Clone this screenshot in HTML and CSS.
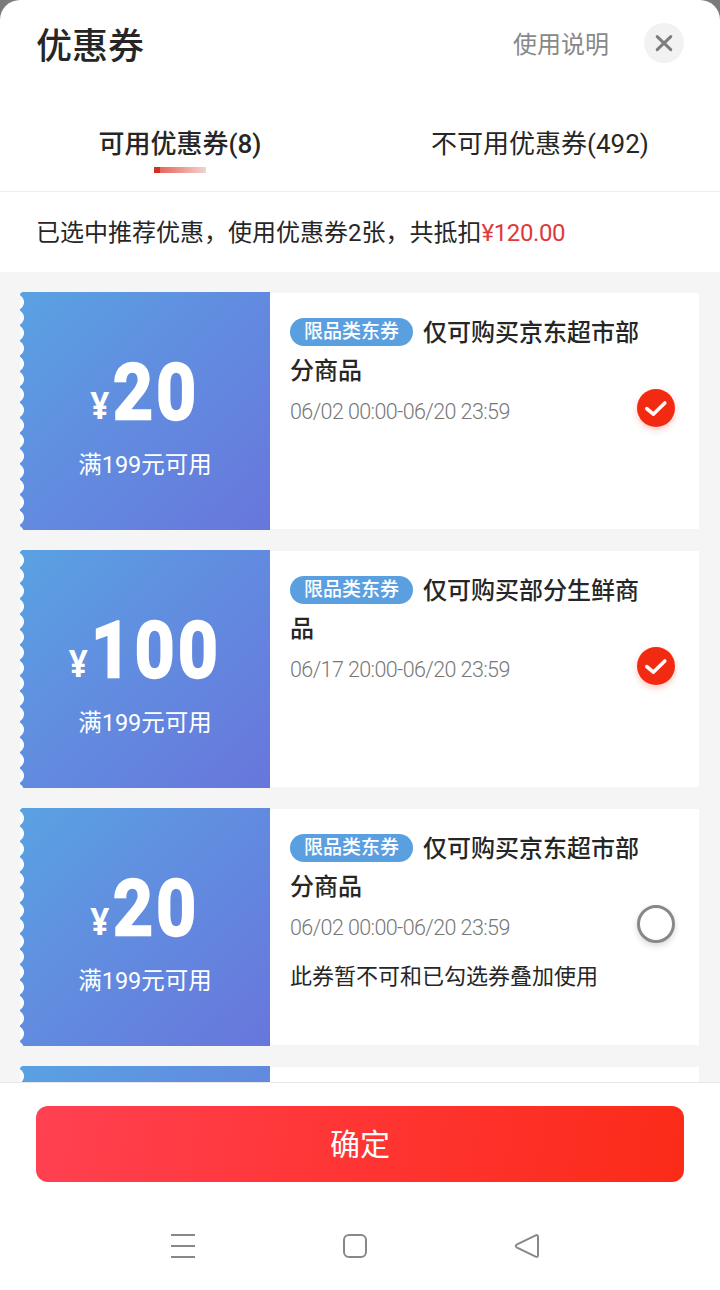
FILE: index.html
```html
<!DOCTYPE html>
<html lang="zh-CN">
<head>
    <meta charset="UTF-8">
    <title>优惠券</title>
    <link rel="stylesheet" href="styles.css">
</head>
<body>
    <div class="popup">
        <header class="header">
            <h1 class="title">优惠券</h1>
            <a class="help">使用说明</a>
            <button class="close" aria-label="关闭">
                <svg width="40" height="40" viewBox="0 0 40 40"><path d="M13.2 13.6l13.6 13M26.8 13.6l-13.6 13" stroke="#7d7d7d" stroke-width="3" stroke-linecap="round"/></svg>
            </button>
        </header>

        <!-- tabs -->
        <nav class="tabs">
            <div class="tab active"><span>可用优惠券(8)</span></div>
            <div class="tab"><span>不可用优惠券(492)</span></div>
        </nav>

        <p class="summary">已选中推荐优惠，使用优惠券2张，共抵扣<span class="red">¥120.00</span></p>

        <!-- coupon list -->
        <main class="list">
            <div class="coupon">
                <div class="price">
                    <div class="amount"><span class="yen">¥</span><span class="num">20</span></div>
                    <div class="limit">满199元可用</div>
                </div>
                <div class="info">
                    <div class="name"><span class="tag">限品类东券</span>仅可购买京东超市部分商品</div>
                    <div class="date">06/02 00:00-06/20 23:59</div>
                </div>
                <div class="check checked">
                    <svg width="38" height="38" viewBox="0 0 38 38"><path d="M9.8 19.6l6.5 5.6L27.8 14" fill="none" stroke="#fff" stroke-width="3.6" stroke-linecap="round" stroke-linejoin="round"/></svg>
                </div>
            </div>

            <div class="coupon">
                <div class="price">
                    <div class="amount"><span class="yen">¥</span><span class="num">100</span></div>
                    <div class="limit">满199元可用</div>
                </div>
                <div class="info">
                    <div class="name"><span class="tag">限品类东券</span>仅可购买部分生鲜商品</div>
                    <div class="date">06/17 20:00-06/20 23:59</div>
                </div>
                <div class="check checked">
                    <svg width="38" height="38" viewBox="0 0 38 38"><path d="M9.8 19.6l6.5 5.6L27.8 14" fill="none" stroke="#fff" stroke-width="3.6" stroke-linecap="round" stroke-linejoin="round"/></svg>
                </div>
            </div>

            <div class="coupon">
                <div class="price">
                    <div class="amount"><span class="yen">¥</span><span class="num">20</span></div>
                    <div class="limit">满199元可用</div>
                </div>
                <div class="info">
                    <div class="name"><span class="tag">限品类东券</span>仅可购买京东超市部分商品</div>
                    <div class="date">06/02 00:00-06/20 23:59</div>
                    <div class="note">此券暂不可和已勾选券叠加使用</div>
                </div>
                <div class="check"></div>
            </div>

            <div class="coupon">
                <div class="price"></div>
                <div class="info"></div>
            </div>
        </main>

        <footer class="footer">
            <button class="confirm">确定</button>
        </footer>

        <!-- system keys -->
        <div class="keys">
            <svg width="26" height="26" viewBox="0 0 26 26"><path d="M1 2h24M1 13h24M1 24h24"/></svg>
            <svg width="26" height="26" viewBox="0 0 26 26"><rect x="2" y="2" width="22" height="22" rx="5"/></svg>
            <svg width="26" height="26" viewBox="0 0 26 26"><path d="M2.6 11.7L21.6 2.4Q24 1.4 24 4V22Q24 24.6 21.6 23.6L2.6 14.3Q0.8 13 2.6 11.7Z"/></svg>
        </div>
    </div>
</body>
</html>
```
FILE: styles.css
```css
* {
    box-sizing: border-box;
}
body {
    margin: 0;
    background: #7b7b7b;
    color: #262626;
    font-family: Roboto, "Noto Sans CJK SC", sans-serif;
}
button {
    border: none;
    padding: 0;
    font-family: inherit;
}
.popup {
    height: 1290px;
    display: flex;
    flex-direction: column;
    background: #fff;
    border-radius: 20px 20px 0 0;
    overflow: hidden;
}

/* header */
.header {
    height: 96px;
    padding: 0 36px;
    display: flex;
    align-items: flex-start;
}
.title {
    flex: 1;
    margin: 19px 0 0;
    font-size: 36px;
    line-height: 56px;
    font-weight: 500;
}
.help {
    margin: 27px 35px 0 0;
    font-size: 24px;
    line-height: 36px;
    color: #888;
}
.close {
    width: 40px;
    height: 40px;
    margin-top: 23px;
    border-radius: 50%;
    background: #f2f2f2;
}
.close svg {
    display: block;
}

/* tabs */
.tabs {
    height: 96px;
    display: flex;
    border-bottom: 1px solid #ededed;
}
.tab {
    flex: 1;
    display: flex;
    flex-direction: column;
    align-items: center;
    padding-top: 28px;
    font-size: 26px;
    line-height: 40px;
}
.active {
    font-weight: 500;
}
.active::after {
    content: "";
    width: 52px;
    height: 6px;
    margin-top: 3px;
    background: linear-gradient(90deg, #d2301f 0 6px, #e5685b 6px, #f5d3cf);
}

.summary {
    height: 80px;
    margin: 0;
    padding-left: 36px;
    font-size: 24px;
    line-height: 83px;
}
.red {
    color: #e0393c;
    letter-spacing: -0.4px;
}

/* coupons */
.list {
    height: 810px;
    padding: 20px 20px 0;
    display: flex;
    flex-direction: column;
    gap: 20px;
    overflow: hidden;
    background: #f5f5f5;
}
.coupon {
    flex: none;
    height: 238px;
    display: flex;
    position: relative;
}
.price {
    width: 250px;
    padding-top: 61px;
    color: #fff;
    text-align: center;
    background:
        radial-gradient(circle at -4px 50%, #fbfdfd 7.6px, transparent 8.3px) 0 2.5px / 12px 15.4px repeat-y,
        linear-gradient(135deg, #59a2e2 0%, #6090e0 38%, #6876dc 100%);
}
.amount {
    height: 80px;
    line-height: 80px;
    font-weight: 700;
    white-space: nowrap;
    transform: scaleX(0.9);
}
.yen {
    margin-right: 4px;
    font-family: "Open Sans", sans-serif;
    font-size: 37px;
    font-weight: 700;
}
.num {
    font-size: 77px;
    letter-spacing: 4px;
    -webkit-text-stroke: 2.4px #fff;
}
.limit {
    margin-top: 14px;
    font-size: 23.5px;
    line-height: 36px;
}
.info {
    width: 429px;
    margin: 1px 0;
    padding: 21px 55px 0 20px;
    background: #fff;
}
.name {
    font-size: 24px;
    line-height: 38px;
    font-weight: 500;
}
.tag {
    display: inline-block;
    height: 28px;
    margin-right: 10px;
    padding: 0 14px;
    border-radius: 14px;
    background: #5a9fe0;
    color: #fff;
    font-size: 19px;
    line-height: 28px;
    vertical-align: 3px;
}
.date {
    margin-top: 6px;
    font-size: 21.5px;
    line-height: 32px;
    font-weight: 300;
    letter-spacing: -0.6px;
    color: #777;
}
.note {
    margin-top: 16px;
    font-size: 22px;
    line-height: 34px;
}
.check {
    position: absolute;
    top: 97px;
    right: 25px;
    width: 38px;
    height: 38px;
    border: 3px solid #888;
    border-radius: 50%;
    background: #fff;
    box-shadow: 0 3px 6px rgba(0, 0, 0, 0.15);
}
.checked {
    border: none;
    background: #f22a12;
    box-shadow: 0 3px 6px rgba(242, 42, 18, 0.25);
}
.check svg {
    display: block;
}

/* bottom */
.footer {
    padding: 23px 36px 0;
    border-top: 1px solid #e8e8e8;
}
.confirm {
    display: block;
    width: 100%;
    height: 76px;
    border-radius: 12px;
    background: linear-gradient(100deg, #ff4152, #ff3636 45%, #fb2b18);
    color: #fff;
    font-size: 30px;
    line-height: 78px;
}
.keys {
    display: flex;
    gap: 146px;
    padding: 51px 0 0 170px;
}
.keys svg {
    fill: none;
    stroke: #888;
    stroke-width: 2;
}
```
